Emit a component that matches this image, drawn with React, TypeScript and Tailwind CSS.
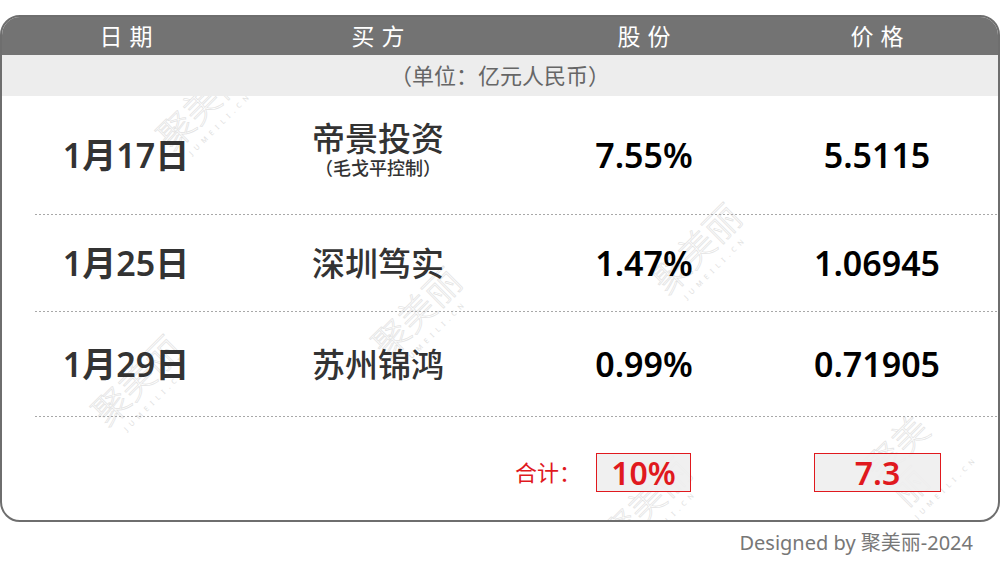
import clsx from 'clsx';

const font = { fontFamily: '"Noto Sans", "Noto Sans CJK SC", sans-serif' };

const rows = [
  { date: '1月17日', buyer: '帝景投资', note: '（毛戈平控制）', share: '7.55%', price: '5.5115', h: 'h-[118px]' },
  { date: '1月25日', buyer: '深圳笃实', share: '1.47%', price: '1.06945', h: 'h-[96px]' },
  { date: '1月29日', buyer: '苏州锦鸿', share: '0.99%', price: '0.71905', h: 'h-[104px]' },
];

// watermark centres, relative to the body under the sub-header
const marks = [
  { x: 205, y: 14 },
  { x: 700, y: 158 },
  { x: 420, y: 222 },
  { x: 140, y: 290 },
  { x: 650, y: 412 },
  { x: 918, y: 365 },
];

function Watermark({ x, y }: { x: number; y: number }) {
  return (
    <div
      className="absolute -translate-x-1/2 -translate-y-1/2 -rotate-45 flex flex-col items-center pointer-events-none select-none"
      style={{ left: x, top: y }}
    >
      <span className="text-[36px] leading-none font-light text-transparent [-webkit-text-stroke:0.7px_#e2e2e2]">聚美丽</span>
      <span className="text-[7px] tracking-[0.7em] text-[#dedede] mt-1">JUMEILI.CN</span>
    </div>
  );
}

const cols = 'grid grid-cols-[248px_256px_276px_190px]';
const dots = 'ml-[33px] h-px bg-[repeating-linear-gradient(to_right,#a8a8a8_0_2px,transparent_2px_4px)]';

export default function App() {
  return (
    <div className="w-[1000px] h-[566px] bg-white pt-[15px] flex flex-col" style={font}>
      <div className="relative h-[507px] border-2 border-[#6e6e6e] rounded-[20px] overflow-hidden flex flex-col">
        <div className={clsx(cols, 'h-[38px] bg-[#737373] text-white text-[23px] items-center text-center relative z-10')}>
          <div className="tracking-[0.3em] pl-[0.3em]">日期</div>
          <div className="tracking-[0.3em] pl-[0.3em]">买方</div>
          <div className="tracking-[0.3em] pl-[0.3em]">股份</div>
          <div className="tracking-[0.3em] pl-[0.3em]">价格</div>
        </div>
        <div className="h-[41px] bg-[#ededed] flex items-center justify-center text-[22px] text-[#666] relative z-10">
          （单位：亿元人民币）
        </div>

        <div className="relative flex-1 flex flex-col">
          {marks.map((m, i) => (
            <Watermark key={i} x={m.x} y={m.y} />
          ))}

          {rows.map((r) => (
            <div key={r.date} className="relative z-10 flex flex-col">
              <div className={clsx(cols, r.h, 'items-center text-center')}>
                <div className="text-[34px] font-semibold text-[#333]">{r.date}</div>
                <div className="flex flex-col items-center text-[#333]">
                  <span className={clsx('text-[33px] font-medium leading-none', r.note && 'mt-[-12px]')}>{r.buyer}</span>
                  {r.note && <span className="text-[18px] font-medium leading-none mt-[4px]">{r.note}</span>}
                </div>
                <div className="text-[34px] font-semibold text-black">{r.share}</div>
                <div className="text-[34px] font-semibold text-black">{r.price}</div>
              </div>
              <div className={dots} />
            </div>
          ))}

          <div className="relative z-10 flex-1 grid grid-cols-[510px_84px_95px_123px_127px] items-center pt-[8px]">
            <div />
            <div className="pl-[3px] text-[22px] text-[#e0191e]">合计：</div>
            <div className="h-[39px] bg-[#eeeeee]/90 border border-[#e0191e] flex items-center justify-center text-[32px] font-semibold text-[#e0191e]">
              10%
            </div>
            <div />
            <div className="h-[39px] bg-[#eeeeee]/90 border border-[#e0191e] flex items-center justify-center text-[32px] font-semibold text-[#e0191e]">
              7.3
            </div>
          </div>
        </div>
      </div>
      <div className="flex justify-end pr-[27px] pt-[6px] text-[20px] text-[#777]">Designed by 聚美丽-2024</div>
    </div>
  );
}
